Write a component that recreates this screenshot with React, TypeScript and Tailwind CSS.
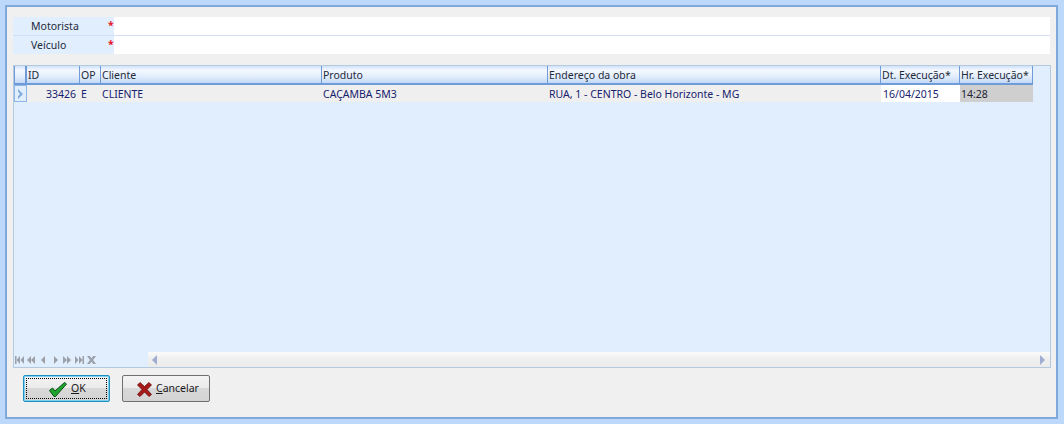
import React from "react";

const cols: [string, string][] = [
  ["ID", "w-[53px]"],
  ["OP", "w-[21px]"],
  ["Cliente", "w-[221px]"],
  ["Produto", "w-[226px]"],
  ["Endereço da obra", "w-[333px]"],
  ["Dt. Execução*", "w-[79px]"],
  ["Hr. Execução*", "w-[73px]"],
];

function Nav() {
  return (
    <svg width="84" height="10" viewBox="0 0 84 10">
      <g fill="#9a9fa8">
        <rect x="0" y="1" width="1.500" height="8" />
        <path d="M5 1v8L1.500 5zM9 1v8L5.500 5z" />
        <path d="M16 1v8l-4-4zM20 1v8l-4-4z" />
        <path d="M30 1v8l-4-4z" />
        <path d="M39 1v8l4-4z" />
        <path d="M48 1v8l4-4zM52 1v8l4-4z" />
        <path d="M60 1v8l3.500-4zM64 1v8l3.500-4z" />
        <rect x="67.500" y="1" width="1.500" height="8" />
        <path d="M72 1h2.800L76.500 3.500 78.200 1H81l-3 4 3 4h-2.800L76.500 6.500 74.800 9H72l3-4z" />
      </g>
    </svg>
  );
}

function Button({
  first,
  icon,
  u,
  rest,
  cls,
}: {
  first?: boolean;
  icon: React.ReactNode;
  u: string;
  rest: string;
  cls: string;
}) {
  return (
    <div
      className={`relative h-[27px] rounded-[2px] border flex items-center bg-[linear-gradient(#f3f3f3_0%,#ebebeb_48%,#d8d8d8_50%,#d4d4d4_100%)] ${cls} ${
        first ? "w-[87px] border-[#1f8fc0] shadow-[inset_0_0_0_1px_#7fd0ee]" : "w-[88px] border-[#707070]"
      }`}
    >
      {first && <div className="absolute inset-[2px] border border-dotted border-black" />}
      <span className="mr-[4px] mt-[1px]">{icon}</span>
      <span className="text-[10.500px] text-[#1a1a1a]">
        <span className="underline">{u}</span>
        {rest}
      </span>
    </div>
  );
}

export default function App() {
  return (
    <div
      className="w-[1064px] h-[424px] bg-[#bcd8fb] pt-[5px] pl-[5px] pr-[6px] pb-[5px] text-[10.500px]"
      style={{ fontFamily: "Tahoma, 'Noto Sans', sans-serif" }}
    >
      <div className="w-full h-full border-2 border-[#7fa8dc] bg-[#f0f0f0] pt-[10px] pl-[6px] pr-[5px] flex flex-col">
        <div className="bg-[#e1eefe] w-[1037px] h-[37px] flex flex-col">
          <div className="flex h-[19px] border-b border-[#cfe0f7]">
            <div className="w-[101px] pl-[18px] text-[#1e2a3a] leading-[18px] relative">
              Motorista
              <span className="absolute left-[95px] top-[-1px] text-[#e8141c] font-bold">*</span>
            </div>
            <div className="flex-1 bg-white" />
          </div>
          <div className="flex h-[18px]">
            <div className="w-[101px] pl-[18px] text-[#1e2a3a] leading-[18px] relative">
              Veículo
              <span className="absolute left-[95px] top-[-1px] text-[#e8141c] font-bold">*</span>
            </div>
            <div className="flex-1 bg-white" />
          </div>
        </div>

        <div className="mt-[11px] w-[1038px] h-[303px] border border-[#b4c8de] bg-[#e1eefe] flex flex-col">
          <div className="flex w-fit h-[19px] border-b-2 border-[#6f9bd8] bg-[linear-gradient(#cfe2fb_0%,#f4f8fe_25%,#e4eefc_60%,#c3d9f7_100%)]">
            <div className="w-[13px] border-r-2 border-l border-[#6f9bd8]" />
            {cols.map(([t, w]) => (
              <div
                key={t}
                className={`${w} shrink-0 border-r border-[#6f9bd8] pl-[1px] text-[#1e2a3a] leading-[18px] whitespace-nowrap overflow-hidden`}
              >
                {t}
              </div>
            ))}
          </div>
          <div className="flex h-[17px] text-[#16216e] leading-[19px]">
            <div className="w-[13px] border border-[#8fb4e6] flex items-center justify-center">
              <svg width="7" height="10" viewBox="0 0 7 10">
                <path d="M1 0l5 5-5 5V7.500L3 5 1 2.500z" fill="#7fa9dc" />
              </svg>
            </div>
            <div className="w-[53px] bg-[#efefef] text-right pr-[4px]">33426</div>
            <div className="w-[21px] bg-[#efefef] pl-[1px]">E</div>
            <div className="w-[221px] bg-[#efefef] pl-[1px]">CLIENTE</div>
            <div className="w-[226px] bg-[#efefef] pl-[1px]">CAÇAMBA 5M3</div>
            <div className="w-[333px] bg-[#efefef] pl-[1px]">RUA, 1 - CENTRO - Belo Horizonte - MG</div>
            <div className="w-[79px] bg-white pl-[2px]">16/04/2015</div>
            <div className="w-[73px] bg-[#cfcfcf] pl-[1px] text-[#222233]">14:28</div>
          </div>
          <div className="flex-1" />
          <div className="flex h-[15px] items-center">
            <div className="w-[134px] pl-[1px]">
              <Nav />
            </div>
            <div className="flex-1 h-full bg-[linear-gradient(#fbfbfb_0%,#f0f0f0_40%,#ebebeb_100%)] flex items-center justify-between px-[4px]">
              <svg width="6" height="10" viewBox="0 0 6 10">
                <path d="M5 0v10L0 5z" fill="#a0acd0" />
              </svg>
              <svg width="6" height="10" viewBox="0 0 6 10">
                <path d="M0 0v10l5-5z" fill="#a0acd0" />
              </svg>
            </div>
          </div>
        </div>

        <div className="mt-[7px] ml-[10px] flex gap-[12px]">
          <Button
            first
            u="O"
            rest="K"
            cls="pl-[25px]"
            icon={
              <svg width="18" height="15" viewBox="0 0 18 15" className="block">
                <path d="M0.500 8.500L3.500 6l2.500 3L15.500 0.500l2 1.500L6.500 14.500h-1.500z" fill="#1fa52e" stroke="#0a4f18" strokeWidth="1" />
              </svg>
            }
          />
          <Button
            u="C"
            rest="ancelar"
            cls="pl-[14px]"
            icon={
              <svg width="15" height="15" viewBox="0 0 15 15" className="block">
                <path d="M0.500 3L3 0.500l4.500 4L12 0.500 14.500 3l-4.500 4.500 4.500 5-2.500 2-4.500-4.500L3 14.500l-2.500-2 4.500-5z" fill="#a81a1a" stroke="#6a0d0d" strokeWidth="0.800" />
              </svg>
            }
          />
        </div>
      </div>
    </div>
  );
}
